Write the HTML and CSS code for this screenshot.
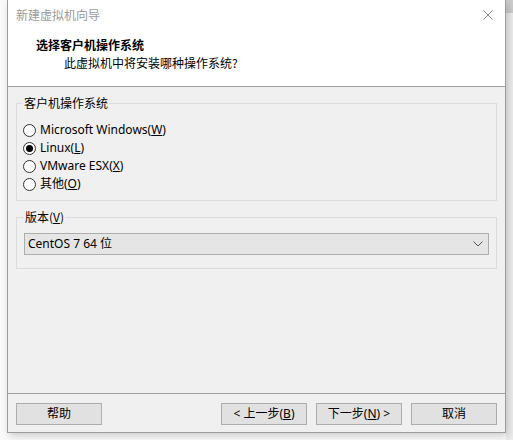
FILE: index.html
```html
<!DOCTYPE html>
<html lang="zh-CN">
<head>
<meta charset="utf-8">
<title>新建虚拟机向导</title>
<link rel="stylesheet" href="styles.css">
</head>
<body>
<div class="window">
  <div class="titlebar">
    <span class="title">新建虚拟机向导</span>
    <svg class="close" width="10" height="10" viewBox="0 0 10 10"><path d="M0.5 0.5 L9.5 9.5 M9.5 0.5 L0.5 9.5" stroke="#8a8a8a" stroke-width="1" fill="none"/></svg>
  </div>
  <div class="header">
    <div class="h-title">选择客户机操作系统</div>
    <div class="h-sub">此虚拟机中将安装哪种操作系统?</div>
  </div>
  <div class="content">
    <fieldset class="group">
      <legend>客户机操作系统</legend>
      <div class="radios">
        <div class="radio"><span class="dot"></span><span>Microsoft Windows(<u>W</u>)</span></div>
        <div class="radio checked"><span class="dot"></span><span>Linux(<u>L</u>)</span></div>
        <div class="radio"><span class="dot"></span><span>VMware ESX(<u>X</u>)</span></div>
        <div class="radio"><span class="dot"></span><span>其他(<u>O</u>)</span></div>
      </div>
    </fieldset>
    <fieldset class="group group2">
      <legend>版本(<u>V</u>)</legend>
      <div class="select">
        <span>CentOS 7 64 位</span>
        <svg width="10" height="6" viewBox="0 0 10 6"><path d="M0.5 0.5 L5 5 L9.5 0.5" stroke="#555" stroke-width="1" fill="none"/></svg>
      </div>
    </fieldset>
  </div>
  <div class="footer">
    <button class="btn">帮助</button>
    <div class="right">
      <button class="btn">&lt; 上一步(<u>B</u>)</button>
      <button class="btn">下一步(<u>N</u>) &gt;</button>
      <button class="btn">取消</button>
    </div>
  </div>
</div>
</body>
</html>
```
FILE: styles.css
```css
html, body {
  margin: 0;
  padding: 0;
}
body {
  width: 513px;
  height: 440px;
  background: linear-gradient(#cdcdcd 0 13px, #ececec 13px) right top / 7px 100% no-repeat, #fafafa;
  font-family: "Segoe UI", "Noto Sans", "Noto Sans CJK SC", sans-serif;
  font-size: 12px;
  color: #000;
  overflow: hidden;
}
.window {
  box-sizing: border-box;
  margin-left: 7px;
  width: 499px;
  height: 433px;
  border: 1px solid #9c9c9c;
  border-top: none;
  background: #f0f0f0;
  display: flex;
  flex-direction: column;
  box-shadow: 2px 3px 8px rgba(0,0,0,0.18);
}
.titlebar {
  height: 30px;
  background: #fff;
  display: flex;
  align-items: center;
  justify-content: space-between;
  padding: 0 12px 0 8px;
}
.title {
  color: #9a9a9a;
  font-family: "Noto Sans CJK SC", sans-serif;
  font-size: 12px;
  line-height: 16px;
}
.close { display: block; }
.header {
  height: 57px;
  box-sizing: border-box;
  background: #fff;
  border-bottom: 1px solid #a0a0a0;
  padding: 7px 0 0 28px;
  font-family: "Noto Sans CJK SC", sans-serif;
  line-height: 16px;
}
.h-title {
  font-weight: bold;
}
.h-sub {
  margin-top: 2px;
  padding-left: 28px;
}
.content {
  flex: 1;
  padding: 8px 8px 0 8px;
}
.group {
  margin: 0;
  border: 1px solid #dcdcdc;
  padding: 10px 7px 7px 6px;
  min-width: 0;
}
.group legend {
  padding: 0 1px;
  line-height: 16px;
  font-family: "Noto Sans CJK SC", sans-serif;
}
.group2 {
  margin-top: 8px;
  padding: 8px 7px 13px 7px;
}
.radio {
  height: 18px;
  display: flex;
  align-items: center;
  gap: 4px;
  line-height: 16px;
}
.dot {
  box-sizing: border-box;
  width: 13px;
  height: 13px;
  border: 1px solid #333;
  border-radius: 50%;
  background: #fff;
  display: flex;
  align-items: center;
  justify-content: center;
  flex: none;
}
.checked .dot::after {
  content: "";
  width: 7px;
  height: 7px;
  border-radius: 50%;
  background: #000;
}
.select {
  box-sizing: border-box;
  height: 22px;
  border: 1px solid #adadad;
  background: #e5e5e5;
  display: flex;
  align-items: center;
  justify-content: space-between;
  padding: 0 5px 0 3px;
  line-height: 16px;
}
.select svg { display: block; }
.footer {
  height: 39px;
  box-sizing: border-box;
  border-top: 1px solid #a0a0a0;
  display: flex;
  justify-content: space-between;
  align-items: flex-start;
  padding: 9px 8px 0 8px;
}
.right {
  display: flex;
  gap: 9px;
}
.btn {
  box-sizing: border-box;
  width: 86px;
  height: 22px;
  margin: 0;
  padding: 0;
  border: 1px solid #adadad;
  background: #e1e1e1;
  font-family: "Segoe UI", "Noto Sans", "Noto Sans CJK SC", sans-serif;
  font-size: 12px;
  line-height: 16px;
  color: #000;
}
```
